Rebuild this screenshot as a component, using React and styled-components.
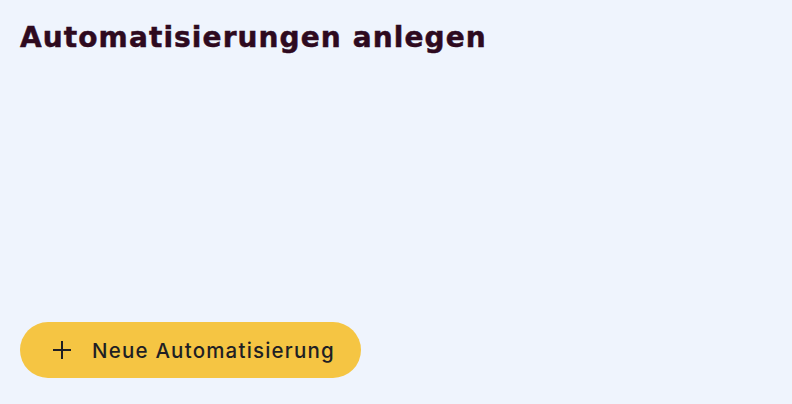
import React from 'react';
import styled, { createGlobalStyle } from 'styled-components';

const GlobalStyle = createGlobalStyle`
  html, body {
    margin: 0;
    padding: 0;
    background: #eff4fd;
  }
`;

const Page = styled.div`
  width: 792px;
  height: 404px;
  box-sizing: border-box;
  padding: 20px 20px 26px 20px;
  display: flex;
  flex-direction: column;
  justify-content: space-between;
  align-items: flex-start;
  background: #eff4fd;
`;

const Title = styled.h1`
  margin: 0;
  font-family: "DejaVu Sans", sans-serif;
  font-weight: 700;
  font-size: 28px;
  line-height: 36px;
  letter-spacing: 1.1px;
  -webkit-text-stroke: 0.5px #2e0a1f;
  color: #2e0a1f;
`;

const AddButton = styled.button`
  display: flex;
  align-items: center;
  gap: 21px;
  height: 56px;
  padding: 0 26px 0 33px;
  border: none;
  border-radius: 28px;
  background: #f5c543;
  color: #1f1f24;
  font-family: Inter, "Noto Sans", sans-serif;
  font-weight: 500;
  font-size: 20.5px;
  letter-spacing: 1.2px;
  cursor: pointer;
`;

const PlusIcon = () => (
  <svg width="18" height="18" viewBox="0 0 18 18" fill="none">
    <path d="M9 0v18M0 9h18" stroke="#1f1f24" strokeWidth="2" />
  </svg>
);

export default function App() {
  return (
    <>
      <GlobalStyle />
      <Page>
        <Title>Automatisierungen anlegen</Title>
        <AddButton>
          <PlusIcon />
          Neue Automatisierung
        </AddButton>
      </Page>
    </>
  );
}
